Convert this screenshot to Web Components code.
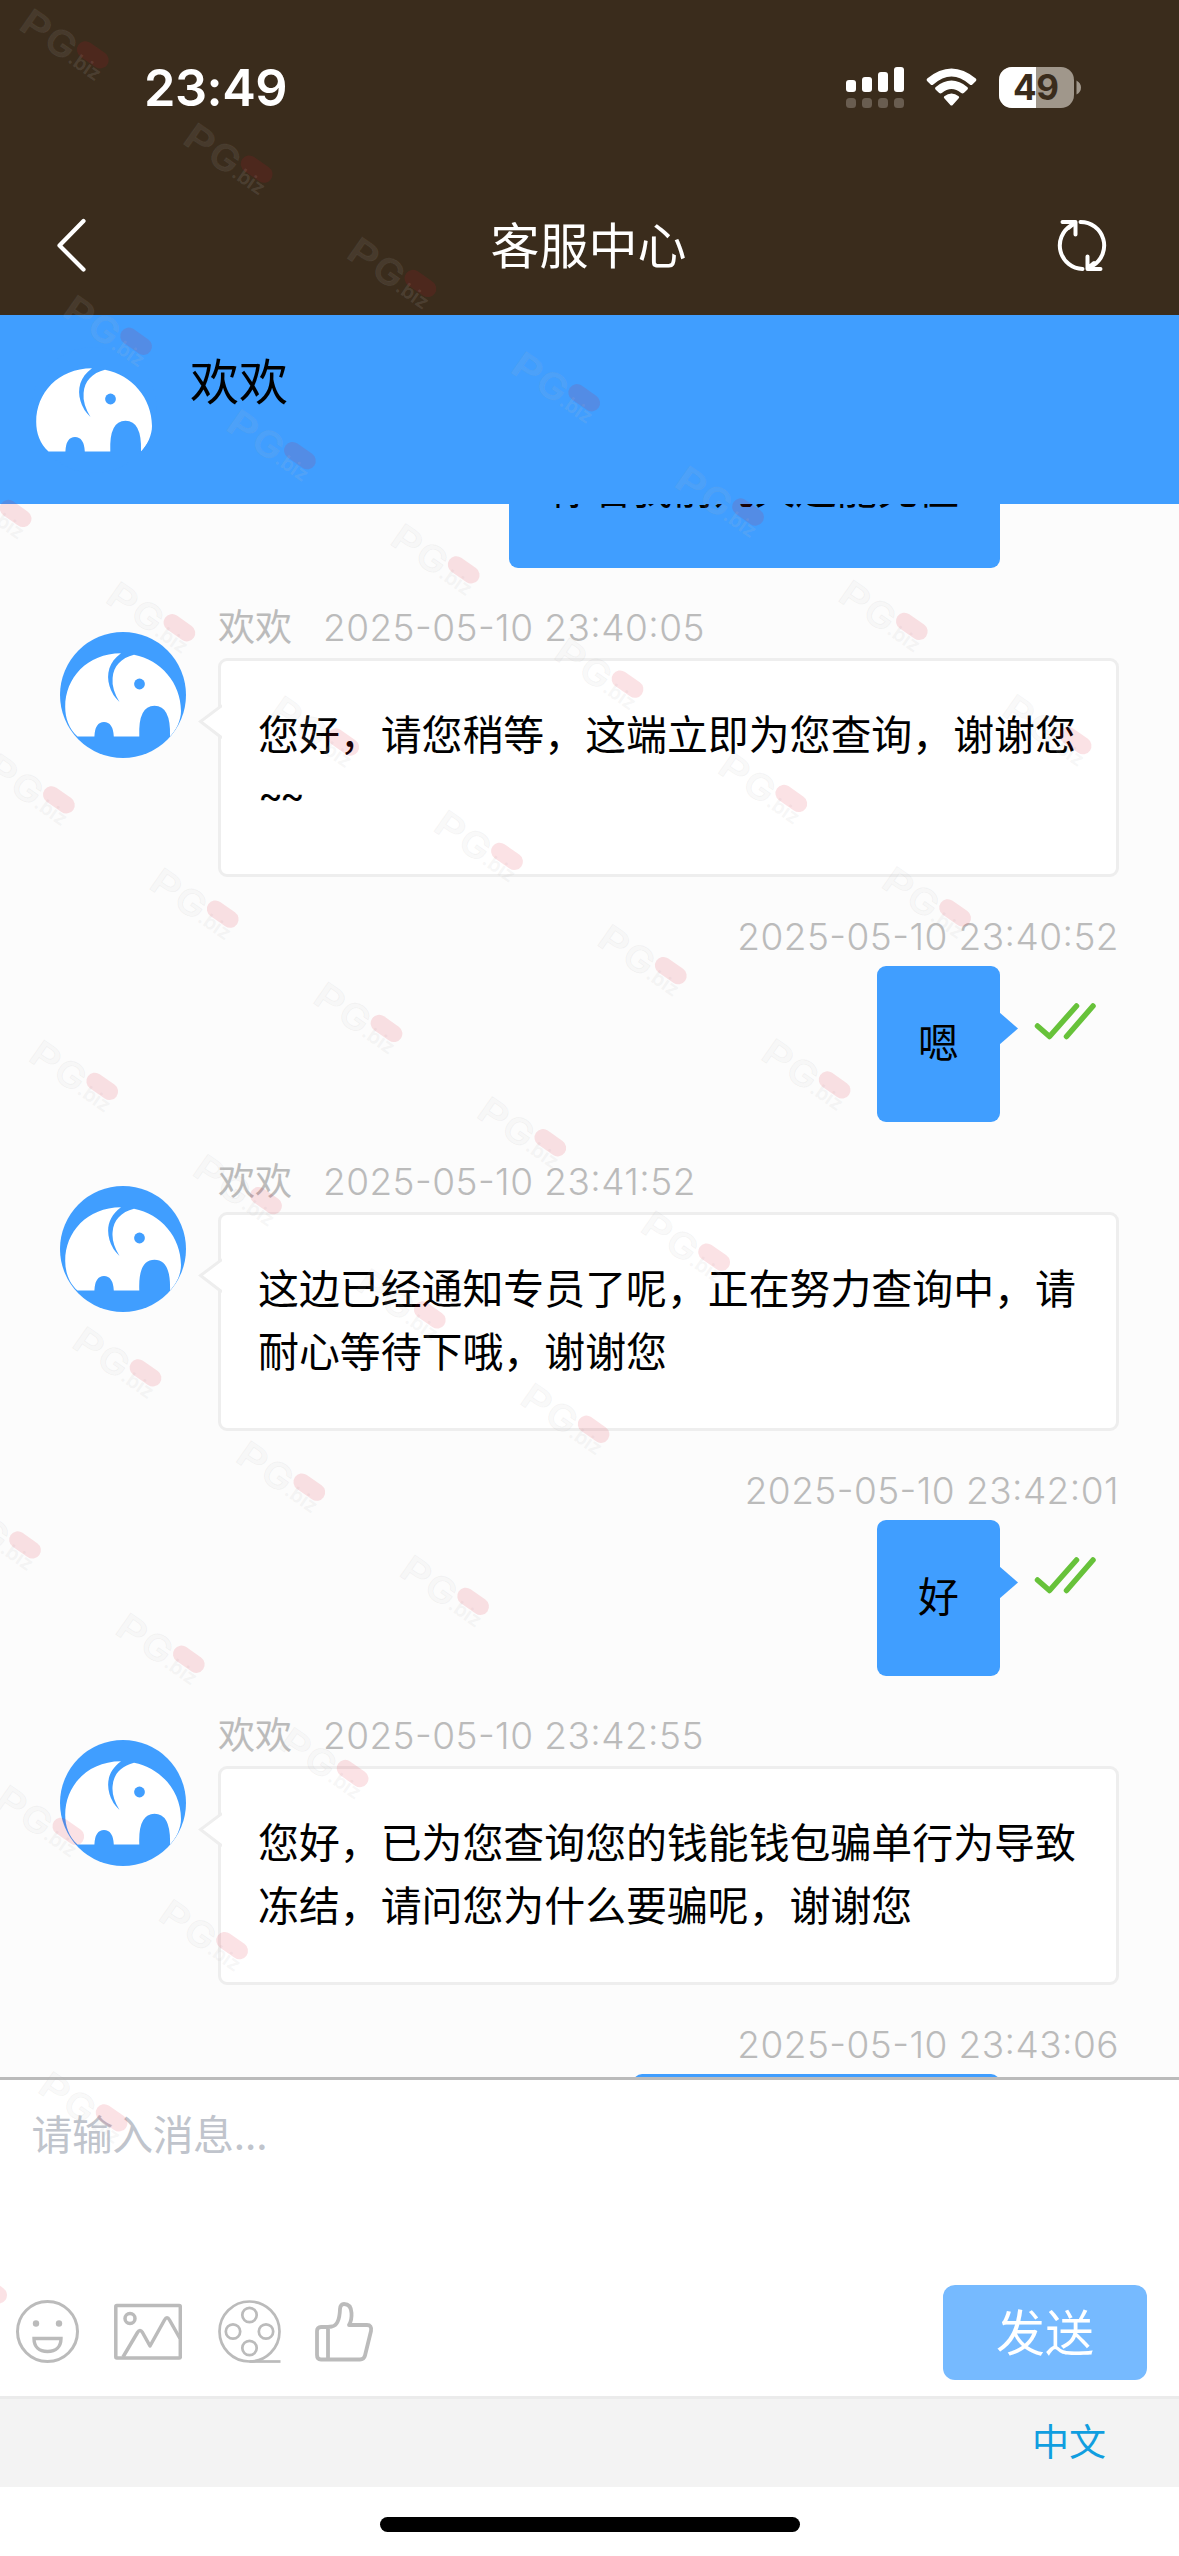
<!DOCTYPE html>
<html lang="zh-CN">
<head>
<meta charset="utf-8">
<title>客服中心</title>
<style>
html,body{margin:0;padding:0}
body{width:1179px;height:2556px;overflow:hidden;background:#fff;font-family:Inter,"Noto Sans CJK SC",sans-serif;color:#000}
</style>
</head>
<body>
<chat-app></chat-app>
<script>
const define = (name, html, setup) => customElements.define(name, class extends HTMLElement {
  constructor() {
    super();
    this.attachShadow({ mode: 'open' }).innerHTML = html;
  }
  connectedCallback() { if (setup) setup(this, this.shadowRoot); }
});

define('status-bar', `
<style>
:host{display:flex;height:175px;align-items:center;justify-content:space-between;padding:0 98px 0 144px;box-sizing:border-box;color:#fff}
.time{font-size:50.5px;font-weight:600;line-height:60px;letter-spacing:-.5px}
svg{display:block}
.right{display:flex;gap:22px}
</style>
<span class="time">23:49</span>
<div class="right">
<svg width="58" height="42" viewBox="0 0 58 42" fill="#fff"><rect y="13" width="10" height="12" rx="3"/><rect x="16" y="10" width="10" height="15" rx="3"/><rect x="32" y="5" width="10" height="20" rx="3"/><rect x="48" width="10" height="25" rx="3"/><g fill="#695d50"><rect y="31" width="10" height="10" rx="3.5"/><rect x="16" y="31" width="10" height="10" rx="3.5"/><rect x="32" y="31" width="10" height="10" rx="3.5"/><rect x="48" y="31" width="10" height="10" rx="3.5"/></g></svg>
<svg width="51" height="42" viewBox="0 0 51 42" fill="#fff"><path d="M1.2 11.5Q0 13 1.3 14.2L4.600 17.500Q6 18.500 7.300 17.500Q25.500 1.500 43.700 17.500Q45 18.500 46.400 17.500L49.700 14.200Q51 13 49.800 11.500Q25.500 -8.500 1.200 11.500Z"/><path d="M9.500 20.200Q8.500 21.300 9.500 22.400L13.200 26.100Q14.500 27 15.800 26.100Q25.500 17.700 35.200 26.100Q36.500 27 37.800 26.100L41.500 22.400Q42.500 21.300 41.500 20.200Q25.500 7 9.500 20.200Z"/><path d="M18.300 29.200Q17.300 30.200 18.300 31.200L24.300 37.900Q25.500 39.100 26.700 37.900L32.700 31.200Q33.700 30.200 32.700 29.200Q25.500 23.800 18.300 29.200Z"/></svg>
<svg width="82" height="42" viewBox="0 0 82 42"><clipPath id="b"><rect width="75" height="41" rx="13"/></clipPath><g clip-path="url(#b)"><path fill="#a0978b" d="M0 0h75v41H0z"/><path fill="#fff" d="M0 0h37v41H0z"/></g><path fill="#a0978b" d="M77.500 13.500Q82 16 82 20.500T77.500 27.500Z"/><text x="37" y="33.300" text-anchor="middle" textLength="46" font-family="Inter" font-size="35" font-weight="700" fill="#3a2c1c">49</text></svg>
</div>`);

define('nav-bar', `
<style>
:host{display:flex;height:140px;align-items:center;justify-content:space-between;padding:0 70px 0 54px;box-sizing:border-box;color:#fff}
svg{display:block}
h1{margin:3px 0 0 14px;font-size:49px;font-weight:400;line-height:60px}
</style>
<svg width="55" height="60" viewBox="0 0 55 60" fill="none" stroke="#fff" stroke-width="4.200" stroke-linecap="round" stroke-linejoin="round"><path d="M29.500 6L5.500 30.500l24 24"/></svg>
<h1><slot></slot></h1>
<svg width="55" height="55" viewBox="0 0 55 55" fill="none" stroke="#fff" stroke-width="4" stroke-linecap="round" stroke-linejoin="round"><path d="M26.500 4A23.500 23.500 0 0 1 39 47.500M28.500 51A23.500 23.500 0 0 1 17 7.500M8.500 4h13v12.500M46.500 51h-13v-12.500M20.500 5l-6 5M34 50l6-5"/></svg>`);

define('elephant-avatar', `
<style>:host{display:block;width:126px;height:126px;border-radius:50%;background:#409eff;overflow:hidden}svg{display:block}</style>
<svg width="126" height="126" viewBox="0 0 126 126"><path fill="#fff" d="M17.500 104.500C9 97 5.200 86 5.200 75C5.200 46 27 21.500 61 21.300C49 30 46 42 49.500 54Q52 63 59.500 70Q51.500 57 52.600 46C53.500 34 61 26 74 22.700C101 28 121 51 121 79C121 88 116.500 98 110 104.500Q111 73.700 94.500 73.700T79.300 104.500H53.800Q53 90 44 90T34.400 104.500Z"/><circle cx="79.500" cy="52" r="5.400" fill="#409eff"/></svg>`);

define('agent-header', `
<style>
:host{display:flex;height:189px;padding:31px 31px;gap:33px;box-sizing:border-box;background:#409eff}
elephant-avatar{margin-top:1px}
span{font-size:49px;line-height:74px}
</style>
<elephant-avatar></elephant-avatar><span><slot></slot></span>`);

define('agent-message', `
<style>
:host{display:flex;gap:32px;padding-left:60px;padding-right:60px;height:272px;flex:none}
elephant-avatar{margin-top:27px;flex:none}
.body{display:flex;flex-direction:column;width:901px;gap:8.500px}
.meta{display:flex;gap:31px;height:44px;line-height:46px;font-size:37px;color:#bbb;white-space:nowrap}
.time{font-weight:350;font-feature-settings:"case";letter-spacing:var(--time-ls)}
.bubble{position:relative;box-sizing:border-box;height:219.500px;border:3px solid #eee;border-radius:9px;background:#fff;padding:43px 37px;font-size:40.900px;line-height:63px;white-space:pre-line}
.bubble svg{position:absolute;left:-23px;top:43px}
</style>
<elephant-avatar></elephant-avatar>
<div class="body"><div class="meta"><span>欢欢</span><span class="time"></span></div>
<div class="bubble"><svg width="24" height="36" viewBox="0 0 24 36"><path d="M24 1.500L2.500 17.500L24 34" fill="#fff" stroke="#eee" stroke-width="3"/></svg><slot></slot></div></div>`,
(el, root) => root.querySelector('.time').textContent = el.getAttribute('time'));

define('user-message', `
<style>
:host{display:flex;flex-direction:column;gap:7.500px;padding-right:60px;align-items:flex-end;flex:none}
.time{height:44px;line-height:46px;font-size:37px;color:#bbb;font-weight:350;font-feature-settings:"case";letter-spacing:var(--time-ls)}
.row{display:flex;align-items:flex-start;gap:34px;padding-right:23px}
.bubble{position:relative;box-sizing:border-box;height:156.500px;min-width:123px;border-radius:9px;background:#409eff;padding:46px 41px;font-size:40.900px;line-height:63px;white-space:nowrap}
.bubble svg{position:absolute;right:-18px;top:46px}
.check{display:block;margin-top:35px}
</style>
<span class="time"></span>
<div class="row"><div class="bubble"><slot></slot><svg width="19" height="33" viewBox="0 0 19 33"><path d="M0 0L19 16.500L0 33Z" fill="#409eff"/></svg></div>
<svg class="check" width="62" height="40" viewBox="0 0 62 40" fill="none" stroke="#67c23a" stroke-width="5.500" stroke-linecap="round" stroke-linejoin="round"><path d="M3.500 25L15.500 35.500L42.500 5M32.500 35.500L59 5"/></svg></div>`,
(el, root) => {
  root.querySelector('.time').textContent = el.getAttribute('time') || '';
  if (el.hasAttribute('width')) root.querySelector('.bubble').style.width = el.getAttribute('width') + 'px';
});

define('message-list', `
<style>
:host{display:flex;flex-direction:column;height:1574px;background:#fcfcfc;overflow:hidden;--time-ls:.45px}
.track{display:flex;flex-direction:column;gap:37px;margin-top:-144px}
</style>
<div class="track"><slot></slot></div>`);

define('tool-icons', `
<style>:host{display:flex;align-items:center;gap:35px;margin-top:-2px}svg{display:block}svg:last-child{margin-left:-3.500px}</style>
<svg width="63" height="63" viewBox="0 0 63 63" fill="none" stroke="#bbb" stroke-width="3"><circle cx="31.500" cy="31.500" r="30"/><g fill="#bbb" stroke="none"><circle cx="20" cy="23.500" r="3.200"/><circle cx="43" cy="23.500" r="3.200"/></g><path stroke-width="3.400" d="M18 38.500h27c0 8-5 13-13.500 13S18 46.500 18 38.500Z"/></svg>
<svg width="68" height="63" viewBox="0 0 68 63" fill="none" stroke="#bbb" stroke-width="3.500" stroke-linejoin="round"><rect x="1.800" y="5.500" width="64.500" height="52.500" rx="1"/><circle cx="16" cy="18.500" r="5"/><path d="M9 57L23.500 32.500Q26 28.500 28.500 32.500L36 46L50.500 20Q53 15.500 55.500 20L66 38.500"/></svg>
<svg width="65" height="63" viewBox="0 0 65 63" fill="none" stroke="#bbb" stroke-width="2.700"><circle cx="32.500" cy="31.500" r="30"/><circle cx="32.500" cy="15" r="7.200"/><circle cx="16" cy="31.500" r="7.200"/><circle cx="49" cy="31.500" r="7.200"/><circle cx="32.500" cy="48" r="7.200"/><path d="M32.500 61.500h31"/></svg>
<svg width="60" height="63" viewBox="0 0 60 63" fill="none" stroke="#bbb" stroke-width="3.800" stroke-linejoin="round"><path d="M14 27H7Q3 27 3 31V55Q3 59.500 7 59.500H46Q50 59.500 51 55.500L57 31Q58 25 53 25H35Q38 20 37.500 13Q37 4 30 4Q26.500 4 26 9Q25.500 25 18 26.500L14 27V59"/></svg>`);

define('chat-composer', `
<style>
:host{display:flex;flex-direction:column;height:318.500px;box-sizing:border-box;border-top:3px solid #bbb;background:#fff}
.field{flex:1;padding:24px 31.500px;font-size:40.900px;line-height:62px;color:#c0c4cc;letter-spacing:-.5px}
.tools{display:flex;align-items:center;justify-content:space-between;height:95px;padding:0 32px 16px 16px}
button{width:204px;height:95px;border:0;border-radius:12px;background:#76baff;color:#fff;font:400 49px/97px Inter,"Noto Sans CJK SC",sans-serif;padding:0}
</style>
<div class="field"><slot></slot></div>
<div class="tools"><tool-icons></tool-icons><button>发送</button></div>`);

define('language-bar', `
<style>:host{display:flex;height:91px;box-sizing:border-box;border-top:3px solid #ebebeb;background:#f3f3f3;align-items:center;justify-content:flex-end;padding-right:73px;font-size:37px;color:#109ee0;line-height:60px}</style>
<span><slot></slot></span>`);

define('home-indicator', `
<style>:host{display:flex;height:69.500px;justify-content:center;align-items:flex-start;padding-top:30.500px;box-sizing:border-box}i{width:420px;height:15px;border-radius:8px;background:#000}</style><i></i>`);

define('water-mark', `
<style>:host{position:absolute;inset:0;pointer-events:none;overflow:hidden}svg{display:block}</style>
<svg width="1179" height="2556" viewBox="0 0 1179 2556"></svg>`,
(el, root) => {
  let out = '';
  for (let k = 0; k < 10; k++) for (let n = -4; n <= 6 - k; n++) {
    const x = 17 + 43.3 * k + 163.8 * n, y = 28 + 286.45 * k + 114.3 * n;
    if (x < -115) continue;
    out += `<g transform="translate(${x.toFixed(1)} ${y.toFixed(1)}) rotate(35)" font-family="Inter" font-weight="600" fill="rgba(200,200,200,.1)">
<g stroke="rgba(160,160,160,.08)" stroke-width="1"><text font-size="36" textLength="29" lengthAdjust="spacingAndGlyphs">P</text><text x="30" font-size="36" textLength="30" lengthAdjust="spacingAndGlyphs">G</text></g>
<text x="60" y="-1" font-size="20" textLength="35" fill="rgba(195,195,195,.15)">.biz</text><rect x="60" y="-30" width="35" height="17" rx="8.500" fill="rgba(225,20,45,.12)"/></g>`;
  }
  root.querySelector('svg').innerHTML = out;
});

define('chat-app', `
<style>
:host{display:flex;flex-direction:column;position:relative;width:1179px;height:2556px;overflow:hidden;background:#fff}
header{background:#3a2c1c}
.tilde{display:inline-block;line-height:55px;font-size:38px;letter-spacing:-3.500px;vertical-align:top}
</style>
<header><status-bar></status-bar><nav-bar>客服中心</nav-bar></header>
<agent-header>欢欢</agent-header>
<message-list>
<user-message>你看我前几天还能充值</user-message>
<agent-message time="2025-05-10 23:40:05">您好，请您稍等，这端立即为您查询，谢谢您<br><span class="tilde">~~</span></agent-message>
<user-message time="2025-05-10 23:40:52">嗯</user-message>
<agent-message time="2025-05-10 23:41:52">这边已经通知专员了呢，正在努力查询中，请<br>耐心等待下哦，谢谢您</agent-message>
<user-message time="2025-05-10 23:42:01">好</user-message>
<agent-message time="2025-05-10 23:42:55">您好，已为您查询您的钱能钱包骗单行为导致<br>冻结，请问您为什么要骗呢，谢谢您</agent-message>
<user-message time="2025-05-10 23:43:06" width="367"></user-message>
</message-list>
<chat-composer>请输入消息...</chat-composer>
<language-bar>中文</language-bar>
<home-indicator></home-indicator>
<water-mark></water-mark>`);
</script>
</body>
</html>
